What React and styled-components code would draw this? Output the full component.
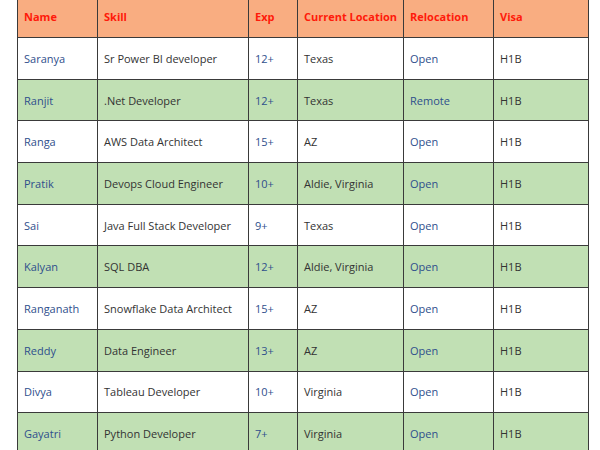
import React from "react";
import styled, { createGlobalStyle } from "styled-components";

const GlobalStyle = createGlobalStyle`
  html, body {
    margin: 0;
    padding: 0;
    background: #fff;
  }
  body {
    font-family: "Open Sans", Lato, sans-serif;
    overflow: hidden;
  }
`;

const rows = [
  ["Saranya", "Sr Power BI developer", "12+", "Texas", "Open", "H1B"],
  ["Ranjit", ".Net Developer", "12+", "Texas", "Remote", "H1B"],
  ["Ranga", "AWS Data Architect", "15+", "AZ", "Open", "H1B"],
  ["Pratik", "Devops Cloud Engineer", "10+", "Aldie, Virginia", "Open", "H1B"],
  ["Sai", "Java Full Stack Developer", "9+", "Texas", "Open", "H1B"],
  ["Kalyan", "SQL DBA", "12+", "Aldie, Virginia", "Open", "H1B"],
  ["Ranganath", "Snowflake Data Architect", "15+", "AZ", "Open", "H1B"],
  ["Reddy", "Data Engineer", "13+", "AZ", "Open", "H1B"],
  ["Divya", "Tableau Developer", "10+", "Virginia", "Open", "H1B"],
  ["Gayatri", "Python Developer", "7+", "Virginia", "Open", "H1B"],
];

const columns = [
  { title: "Name", width: 80, blue: true },
  { title: "Skill", width: 151 },
  { title: "Exp", width: 49, blue: true },
  { title: "Current Location", width: 106 },
  { title: "Relocation", width: 90, blue: true },
  { title: "Visa", width: 95 },
];

const Sheet = styled.div`
  padding-left: 17px;
  margin-top: -4px;
`;

const Table = styled.table`
  border-collapse: collapse;
  table-layout: fixed;
  width: 571px;
  font-size: 11px;
`;

const HeadCell = styled.th`
  background: #f9ad81;
  color: #ff1a0a;
  font-weight: 700;
  text-align: left;
  height: 41px;
  padding: 0 6px;
  border: 1px solid #3a3a3a;
  border-top: none;
  white-space: nowrap;
  overflow: hidden;
`;

const Row = styled.tr`
  background: ${(p) => (p.$green ? "#c1e0b4" : "#ffffff")};
  height: 41.7px;
`;

const Cell = styled.td`
  color: ${(p) => (p.$blue ? "#2f4f8c" : "#333333")};
  padding: 0 6px;
  border: 1px solid #3a3a3a;
  white-space: nowrap;
  overflow: hidden;
`;

export default function App() {
  return (
    <>
      <GlobalStyle />
      <Sheet>
        <Table>
          <colgroup>
            {columns.map((c) => (
              <col key={c.title} style={{ width: c.width }} />
            ))}
          </colgroup>
          <thead>
            <tr>
              {columns.map((c) => (
                <HeadCell key={c.title}>{c.title}</HeadCell>
              ))}
            </tr>
          </thead>
          <tbody>
            {rows.map((r, i) => (
              <Row key={r[0]} $green={i % 2 === 1}>
                {r.map((v, j) => (
                  <Cell key={j} $blue={columns[j].blue}>
                    {v}
                  </Cell>
                ))}
              </Row>
            ))}
          </tbody>
        </Table>
      </Sheet>
    </>
  );
}
